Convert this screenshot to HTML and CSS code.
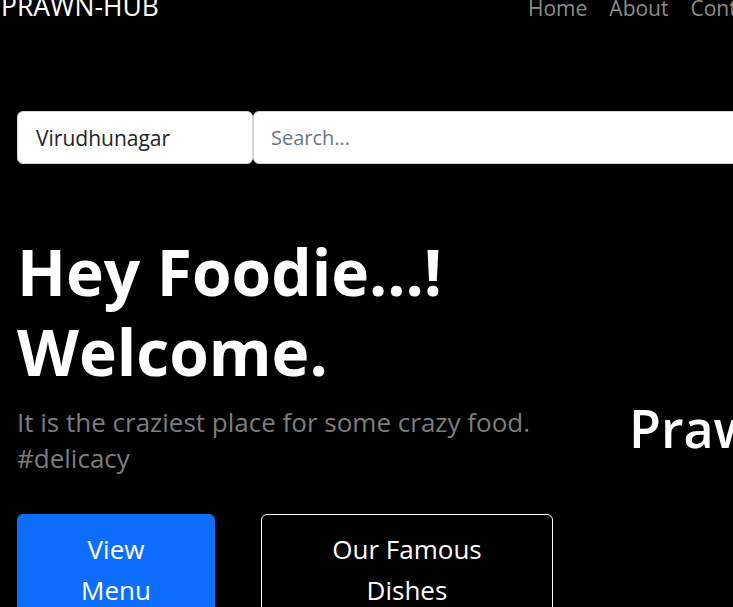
FILE: index.html
```html
<!DOCTYPE html>
<html lang="en">
<head>
<meta charset="utf-8">
<title>PRAWN-HUB</title>
<link rel="stylesheet" href="styles.css">
</head>
<body>
<nav class="navbar">
  <a class="brand" href="#">PRAWN-HUB</a>
  <ul class="nav-links">
    <li><a href="#">Home</a></li>
    <li><a href="#">About</a></li>
    <li><a href="#">Contact</a></li>
  </ul>
</nav>
<main class="page">
  <div class="input-group">
    <input class="city" type="text" value="Virudhunagar">
    <input class="search" type="text" placeholder="Search...">
  </div>
  <section class="hero">
    <div class="hero-text">
      <h1 class="title">Hey Foodie...!<br>Welcome.</h1>
      <p class="lead">It is the craziest place for some crazy food.<br>#delicacy</p>
      <div class="actions">
        <a class="btn btn-primary" href="#">View<br>Menu</a>
        <a class="btn btn-outline" href="#">Our Famous<br>Dishes</a>
      </div>
    </div>
    <div class="hero-side">
      <h2 class="side-title">Prawn-Hub</h2>
    </div>
  </section>
</main>
</body>
</html>
```
FILE: styles.css
```css
html, body {
  margin: 0;
  padding: 0;
  background: #000;
  overflow: hidden;
  height: 607px;
}
body {
  font-family: "Open Sans", "Noto Sans", sans-serif;
  color: #fff;
  width: 1200px;
}
a { text-decoration: none; }

.navbar {
  display: grid;
  grid-template-columns: 528px auto;
  align-items: baseline;
  margin-top: -6px;
  height: 31px;
}
.brand {
  color: #fff;
  font-size: 26.5px;
  line-height: 24px;
  padding-left: 1px;
}
.nav-links {
  list-style: none;
  margin: 0;
  padding: 0;
  display: flex;
  gap: 22px;
}
.nav-links a {
  color: #8c8c8c;
  font-size: 21px;
  line-height: 24px;
}

.page {
  padding-left: 17px;
}
.input-group {
  display: flex;
  margin-top: 86px;
  height: 53px;
}
.input-group input {
  font-family: inherit;
  font-size: 20px;
  color: #212529;
  background: #fff;
  border: 1px solid #ced4da;
  padding: 0 17px;
  height: 53px;
  box-sizing: border-box;
  outline: none;
  border-radius: 6px;
}
.city {
  width: 236px;
  font-size: 21px !important;
  padding-left: 18px !important;
}
.search {
  width: 700px;
}
.search::placeholder { color: #6c757d; }

.hero {
  display: flex;
  margin-top: 68px;
}
.hero-text {
  width: 612px;
}
.title {
  margin: 0;
  font-size: 64px;
  line-height: 80px;
  font-weight: 700;
}
.lead {
  margin: 12px 0 0;
  font-size: 26px;
  line-height: 36px;
  color: #7d7d7d;
  font-weight: 400;
}
.actions {
  display: flex;
  gap: 46px;
  margin-top: 38px;
}
.btn {
  display: block;
  box-sizing: border-box;
  text-align: center;
  font-size: 26px;
  line-height: 41px;
  padding: 14px 0 20px;
  border-radius: 6px;
  border: 1px solid transparent;
  color: #fff;
}
.btn-primary {
  width: 198px;
  background: #0d6efd;
  border-color: #0d6efd;
}
.btn-outline {
  width: 292px;
  border-color: #fff;
}
.hero-side {
  margin-top: 165px;
}
.side-title {
  margin: 0;
  font-size: 52px;
  line-height: 62px;
  font-weight: 600;
}
```
